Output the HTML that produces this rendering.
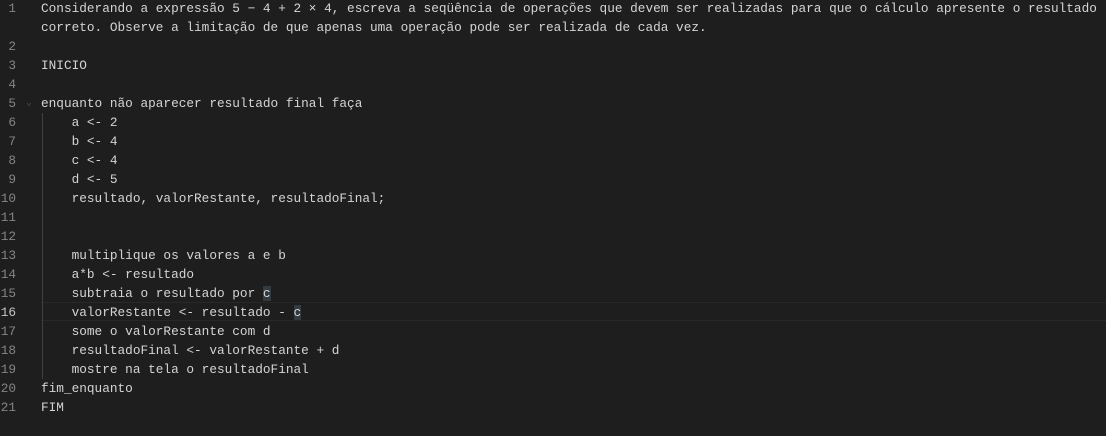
<!DOCTYPE html>
<html><head><style>
body{margin:0;width:1106px;height:436px;background:#1e1e1e;overflow:hidden;font-family:"Liberation Mono",monospace;font-size:12.75px;}
.r{position:absolute;left:0;height:19px;line-height:19px;width:1106px;white-space:pre;color:#d4d4d4}
.n{position:absolute;left:0;width:16px;text-align:right;color:#858585}
.t{position:absolute;left:41px}
.cur{color:#c6c6c6}
.hl{position:absolute;left:41px;right:0;top:302px;height:19px;box-sizing:border-box;border-top:1px solid #282828;border-bottom:1px solid #282828}
.g{position:absolute;left:42px;top:113px;width:1px;height:266px;background:#404040}
.br{background:#333a40}
</style></head><body>
<div class="hl"></div>
<div class="g"></div>
<div class="r" style="top:-1px"><span class="n">1</span><span class="t">Considerando a expressão 5 − 4 + 2 × 4, escreva a seqüência de operações que devem ser realizadas para que o cálculo apresente o resultado</span></div>
<div class="r" style="top:18px"><span class="t">correto. Observe a limitação de que apenas uma operação pode ser realizada de cada vez.</span></div>
<div class="r" style="top:37px"><span class="n">2</span></div>
<div class="r" style="top:56px"><span class="n">3</span><span class="t">INICIO</span></div>
<div class="r" style="top:75px"><span class="n">4</span></div>
<div class="r" style="top:94px"><span class="n">5</span><span style="position:absolute;left:26px;color:#4a4a4a;font-size:10px">⌄</span><span class="t">enquanto não aparecer resultado final faça</span></div>
<div class="r" style="top:113px"><span class="n">6</span><span class="t">    a &lt;- 2</span></div>
<div class="r" style="top:132px"><span class="n">7</span><span class="t">    b &lt;- 4</span></div>
<div class="r" style="top:151px"><span class="n">8</span><span class="t">    c &lt;- 4</span></div>
<div class="r" style="top:170px"><span class="n">9</span><span class="t">    d &lt;- 5</span></div>
<div class="r" style="top:189px"><span class="n">10</span><span class="t">    resultado, valorRestante, resultadoFinal;</span></div>
<div class="r" style="top:208px"><span class="n">11</span></div>
<div class="r" style="top:227px"><span class="n">12</span></div>
<div class="r" style="top:246px"><span class="n">13</span><span class="t">    multiplique os valores a e b</span></div>
<div class="r" style="top:265px"><span class="n">14</span><span class="t">    a*b &lt;- resultado</span></div>
<div class="r" style="top:284px"><span class="n">15</span><span class="t">    subtraia o resultado por <span class="br">c</span></span></div>
<div class="r" style="top:303px"><span class="n cur">16</span><span class="t">    valorRestante &lt;- resultado - <span class="br">c</span></span></div>
<div class="r" style="top:322px"><span class="n">17</span><span class="t">    some o valorRestante com d</span></div>
<div class="r" style="top:341px"><span class="n">18</span><span class="t">    resultadoFinal &lt;- valorRestante + d</span></div>
<div class="r" style="top:360px"><span class="n">19</span><span class="t">    mostre na tela o resultadoFinal</span></div>
<div class="r" style="top:379px"><span class="n">20</span><span class="t">fim_enquanto</span></div>
<div class="r" style="top:398px"><span class="n">21</span><span class="t">FIM</span></div>
</body></html>
